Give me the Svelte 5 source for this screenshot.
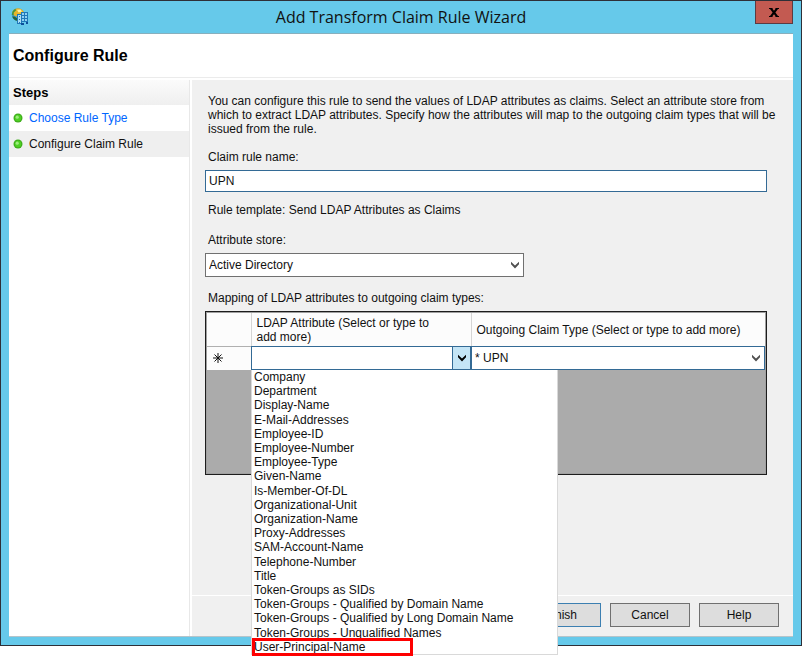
<script>
  const steps = [
    { label: 'Choose Rule Type', current: false },
    { label: 'Configure Claim Rule', current: true }
  ];

  const attributes = [
    'Company',
    'Department',
    'Display-Name',
    'E-Mail-Addresses',
    'Employee-ID',
    'Employee-Number',
    'Employee-Type',
    'Given-Name',
    'Is-Member-Of-DL',
    'Organizational-Unit',
    'Organization-Name',
    'Proxy-Addresses',
    'SAM-Account-Name',
    'Telephone-Number',
    'Title',
    'Token-Groups as SIDs',
    'Token-Groups - Qualified by Domain Name',
    'Token-Groups - Qualified by Long Domain Name',
    'Token-Groups - Unqualified Names',
    'User-Principal-Name'
  ];
  const marked = 'User-Principal-Name';

  let ruleName = $state('UPN');
  let ldapAttribute = $state('');
  let open = $state(true);

  function choose(name) {
    ldapAttribute = name;
    open = false;
  }
</script>

{#snippet chevron()}
  <svg class="chevron" width="10" height="8" viewBox="0 0 10 8" aria-hidden="true">
    <path d="M1 0.8 L5 4.6 L9 0.8 V3.2 L5 7.4 L1 3.2 Z" fill="currentColor" />
  </svg>
{/snippet}

<div class="page">
  <div class="window">
    <header class="titlebar">
      <svg class="app-icon" width="18" height="18" viewBox="0 0 18 18" aria-hidden="true">
        <circle cx="7" cy="6.5" r="6.3" fill="#3f9bd4" />
        <path d="M1 4.500 Q2.500 0.600 6.500 0.300 Q11 0.200 12.800 3.800 L12 6 L8 6 L6 8.500 L3 7.500 Z" fill="#e6b52a" />
        <path d="M0.900 7 Q0.800 2.500 4.500 0.800 L5 2.500 L2.800 4.500 L2.600 7.500Z" fill="#3f9442" />
        <path d="M6 1.800 L9.500 1.400 L11 3.600 L7.500 4.600Z" fill="#fff0a0" />
        <path d="M1.200 8.500 L3.500 8.500 L6.500 10.500 L6.500 13 Q2.500 12.200 1.200 8.500Z" fill="#23633a" />
        <rect x="6.500" y="6.500" width="4" height="9" fill="#a9dcf5" stroke="#1f78b8" />
        <rect x="10.500" y="4.500" width="6" height="9" fill="#8fd0f2" stroke="#1f78b8" />
        <path d="M13.500 5v8M11 7.500h5M11 10.500h5M8.500 8v1M8.500 11v1M8.500 14v1" stroke="#1f78b8" />
        <path d="M10 15h3v2h-3zM15 14h2v2h-2z" fill="#0d4f9a" />
      </svg>
      <h1>Add Transform Claim Rule Wizard</h1>
      <button class="close" type="button" aria-label="Close">
        <svg width="10" height="9" viewBox="0 0 10 9" aria-hidden="true">
          <path d="M0 0H3.600V1L5 2.800L6.400 1V0H10V1H9L6.400 4.500L9 8H10V9H6.400V8L5 6.200L3.600 8V9H0V8H1L3.600 4.500L1 1H0Z" fill="#000" />
        </svg>
      </button>
    </header>

    <div class="client">
      <h2 class="heading">Configure Rule</h2>

      <div class="columns">
        <nav class="steps" aria-labelledby="steps-title">
          <h3 id="steps-title">Steps</h3>
          <ol>
            {#each steps as step}
              <li class:current={step.current}>
                <svg width="10" height="10" viewBox="0 0 10 10" aria-hidden="true">
                  <circle cx="5" cy="5" r="4.500" fill="#3fae1c" />
                  <circle cx="5" cy="5" r="3.200" fill="#4fd024" />
                  <circle cx="4.200" cy="4.200" r="1.600" fill="#9cec7c" />
                </svg>
                {#if step.current}
                  <span aria-current="step">{step.label}</span>
                {:else}
                  <a href="#choose-rule-type">{step.label}</a>
                {/if}
              </li>
            {/each}
          </ol>
        </nav>

        <main>
          <form class="body" onsubmit={(e) => e.preventDefault()}>
            <p class="intro">
              You can configure this rule to send the values of LDAP attributes as claims. Select an attribute store from
              which to extract LDAP attributes. Specify how the attributes will map to the outgoing claim types that will be
              issued from the rule.
            </p>

            <div class="fields">
              <label class="caption" for="rule-name">Claim rule name:</label>
              <input id="rule-name" class="text" type="text" bind:value={ruleName} />

              <p class="caption template">Rule template: Send LDAP Attributes as Claims</p>

              <label class="caption" for="store">Attribute store:</label>
              <div class="select store">
                <select id="store">
                  <option>Active Directory</option>
                </select>
                {@render chevron()}
              </div>

              <p class="caption" id="mapping">Mapping of LDAP attributes to outgoing claim types:</p>
              <div class="grid">
                <table aria-labelledby="mapping">
                  <colgroup>
                    <col class="marker-col" />
                    <col class="ldap-col" />
                    <col />
                  </colgroup>
                  <thead>
                    <tr>
                      <th aria-label="Row"></th>
                      <th scope="col"><span>LDAP Attribute (Select or type to add more)</span></th>
                      <th scope="col">Outgoing Claim Type (Select or type to add more)</th>
                    </tr>
                  </thead>
                  <tbody>
                    <tr>
                      <td class="marker">
                        <svg width="10" height="10" viewBox="0 0 10 10" aria-label="New row" role="img">
                          <path d="M5 0V10M0 5H10M1.500 1.500L8.500 8.500M8.500 1.500L1.500 8.500" stroke="#111" />
                        </svg>
                      </td>
                      <td class="cell">
                        <div class="combo">
                          <input
                            type="text"
                            role="combobox"
                            aria-label="LDAP Attribute"
                            aria-controls="attribute-list"
                            aria-expanded={open}
                            bind:value={ldapAttribute}
                          />
                          <button type="button" aria-label="Show attributes" onclick={() => (open = !open)}>
                            {@render chevron()}
                          </button>
                        </div>
                        {#if open}
                          <ul class="options" id="attribute-list" role="listbox" aria-label="LDAP attributes">
                            {#each attributes as name}
                              <li
                                class:marked={name === marked}
                                role="option"
                                tabindex="-1"
                                aria-selected={name === ldapAttribute}
                                onclick={() => choose(name)}
                                onkeydown={(e) => e.key === 'Enter' && choose(name)}
                              >{name}</li>
                            {/each}
                          </ul>
                        {/if}
                      </td>
                      <td class="cell">
                        <div class="select claim">
                          <select aria-label="Outgoing Claim Type">
                            <option>* UPN</option>
                          </select>
                          {@render chevron()}
                        </div>
                      </td>
                    </tr>
                  </tbody>
                </table>
              </div>
            </div>
          </form>

          <footer>
            <button class="push default" type="button">Finish</button>
            <button class="push" type="button">Cancel</button>
            <button class="push" type="button">Help</button>
          </footer>
        </main>
      </div>
    </div>
  </div>
</div>

<style>
  :global(body) {
    background: #fff;
  }

  .page,
  .page * {
    box-sizing: border-box;
  }

  .page {
    display: flex;
    min-height: 100vh;
    padding-bottom: 11px;
    font: 12px/14px 'Liberation Sans', Arial, sans-serif;
    color: #111;
  }

  h1,
  h2,
  h3,
  p,
  ol,
  ul {
    margin: 0;
    padding: 0;
    list-style: none;
  }

  input,
  select,
  button {
    margin: 0;
    font: inherit;
    color: inherit;
    border-radius: 0;
    outline: none;
    appearance: none;
  }

  .window {
    flex: 1;
    min-width: 0;
    display: flex;
    flex-direction: column;
    padding: 0 8px 8px;
    border: 1px solid #2e2f37;
    background: #66c9ea;
  }

  .titlebar {
    display: grid;
    grid-template-columns: 38px 1fr 38px;
    align-items: center;
    height: 32px;
  }

  .app-icon {
    margin-left: 2px;
  }

  h1 {
    text-align: center;
    font: 16px/20px 'Open Sans', 'Noto Sans', sans-serif;
  }

  .close {
    display: flex;
    align-items: center;
    justify-content: center;
    align-self: start;
    width: 38px;
    height: 23px;
    padding: 0;
    border: 1px solid #5b3b42;
    border-top: 0;
    background: #c35a51;
  }

  .client {
    flex: 1;
    display: flex;
    flex-direction: column;
    border-top: 1px solid #87afbd;
    border-bottom: 1px solid #b5c4ca;
    background: #fff;
  }

  .heading {
    height: 44px;
    padding: 0 4px;
    border-bottom: 1px solid #ebebeb;
    font: bold 16px/44px 'Liberation Sans', Arial, sans-serif;
    color: #000;
  }

  .columns {
    flex: 1;
    display: flex;
    gap: 2px;
    padding-top: 2px;
  }

  .steps {
    flex: none;
    width: 181px;
    border-right: 1px solid #e8e8e8;
  }

  .steps h3 {
    height: 25px;
    padding: 0 4px;
    background: linear-gradient(#fbfbfb, #efefef);
    font: bold 13px/26px 'Liberation Sans', Arial, sans-serif;
    color: #000;
  }

  .steps li {
    display: flex;
    align-items: center;
    gap: 6px;
    height: 26px;
    padding: 0 4px;
  }

  .steps li.current {
    background: #efefef;
  }

  .steps a {
    color: #0066ff;
    text-decoration: none;
  }

  main {
    flex: 1;
    min-width: 0;
    display: flex;
    flex-direction: column;
    background: #f0f0f0;
  }

  .body {
    flex: 1;
    padding: 14px 0 24px 13px;
  }

  .intro,
  .caption {
    padding-left: 3px;
  }

  .intro {
    margin-bottom: 14px;
    padding-right: 6px;
  }

  .fields {
    display: flex;
    flex-direction: column;
    margin-right: 26px;
  }

  .caption {
    margin-bottom: 6px;
  }

  .text {
    width: 100%;
    height: 22px;
    margin-bottom: 11px;
    padding: 0 3px;
    border: 1px solid #336a95;
    background: #fff;
  }

  .template {
    margin-bottom: 16px;
  }

  .select {
    position: relative;
  }

  .select select {
    display: block;
    width: 100%;
    height: 24px;
    padding: 0 24px 0 3px;
    border: 1px solid #707070;
    background: #fff;
  }

  .select .chevron {
    position: absolute;
    right: 4px;
    top: 8px;
    color: #505050;
    pointer-events: none;
  }

  .store {
    width: 319px;
    margin-bottom: 14px;
  }

  .grid {
    min-height: 164px;
    border: 1px solid #1c1c1c;
    outline: 1px solid #a0a0a0;
    outline-offset: -2px;
    background: #ababab;
    padding: 1px;
  }

  table {
    width: 100%;
    table-layout: fixed;
    border-collapse: collapse;
  }

  .marker-col {
    width: 44px;
  }

  .ldap-col {
    width: 220px;
  }

  th {
    height: 33px;
    padding: 1px 5px 0;
    border-left: 1px solid #d5d5d5;
    background: #fcfcfc;
    text-align: left;
    font-weight: normal;
  }

  th:first-child {
    border-left: 0;
  }

  th span {
    display: block;
    padding-right: 24px;
  }

  td {
    height: 24px;
    padding: 0;
    background: #fff;
  }

  .marker {
    padding-left: 6px;
    border-top: 1px solid #b0b0b0;
    background: #fcfcfc;
  }

  .marker svg {
    display: block;
  }

  .cell {
    position: relative;
  }

  .combo {
    display: flex;
    height: 24px;
    border: 1px solid #336a95;
  }

  .combo input {
    flex: 1;
    min-width: 0;
    padding: 0 3px;
    border: 0;
    background: #fff;
  }

  .combo button {
    display: flex;
    align-items: center;
    justify-content: center;
    width: 18px;
    padding: 0;
    border: 0;
    border-left: 1px solid #336a95;
    background: #c4e5f6;
    color: #000;
  }

  .claim select {
    border-color: #336a95;
  }

  .options {
    position: absolute;
    z-index: 2;
    top: 100%;
    left: 0;
    display: grid;
    grid-auto-rows: 1fr;
    width: 307px;
    height: 285px;
    border: 1px solid #d9d9d9;
    border-top: 0;
    background: #fff;
  }

  .options li {
    position: relative;
    padding-left: 2px;
    white-space: nowrap;
  }

  .marked::after {
    content: '';
    position: absolute;
    box-sizing: border-box;
    left: 0;
    top: -2px;
    width: 161px;
    height: 18px;
    border: 3px solid #fe0000;
  }

  footer {
    display: flex;
    justify-content: flex-end;
    gap: 9px;
    padding: 7px 14px 9px;
    border-top: 1px solid #fff;
  }

  .push {
    width: 80px;
    height: 24px;
    padding: 0;
    border: 1px solid #707070;
    background: #dddddd;
  }

  .push.default {
    border-color: #3c7fb1;
  }
</style>
